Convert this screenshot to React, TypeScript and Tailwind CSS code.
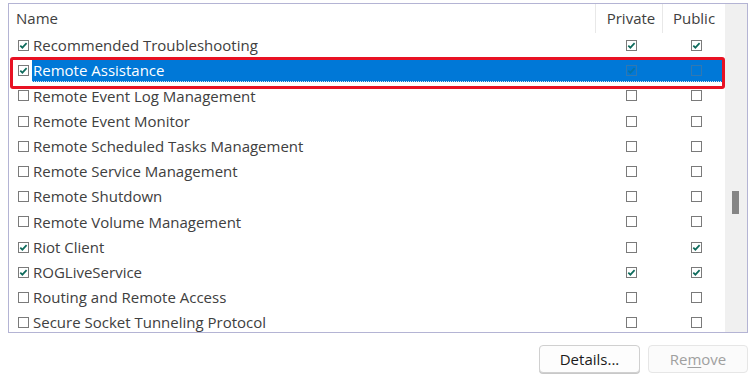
import React from "react";

type Row = { name: string; on: boolean; priv: boolean; pub: boolean; sel?: boolean };

const rows: Row[] = [
  { name: "Recommended Troubleshooting", on: true, priv: true, pub: true },
  { name: "Remote Assistance", on: true, priv: true, pub: false, sel: true },
  { name: "Remote Event Log Management", on: false, priv: false, pub: false },
  { name: "Remote Event Monitor", on: false, priv: false, pub: false },
  { name: "Remote Scheduled Tasks Management", on: false, priv: false, pub: false },
  { name: "Remote Service Management", on: false, priv: false, pub: false },
  { name: "Remote Shutdown", on: false, priv: false, pub: false },
  { name: "Remote Volume Management", on: false, priv: false, pub: false },
  { name: "Riot Client", on: true, priv: false, pub: true },
  { name: "ROGLiveService", on: true, priv: true, pub: true },
  { name: "Routing and Remote Access", on: false, priv: false, pub: false },
  { name: "Secure Socket Tunneling Protocol", on: false, priv: false, pub: false },
];

function Box({ checked, faded }: { checked: boolean; faded?: boolean }) {
  return (
    <svg width="11" height="11" viewBox="0 0 11 11" className={faded ? "opacity-40" : ""}>
      <rect
        x="0.5"
        y="0.5"
        width="10"
        height="10"
        fill={faded ? "none" : "#ffffff"}
        stroke="#7a7a7a"
        strokeWidth="1"
      />
      {checked && (
        <path d="M2.3 5.6 L4.4 7.7 L8.6 3.2" fill="none" stroke="#0e6b5c" strokeWidth="1.7" />
      )}
    </svg>
  );
}

export default function App() {
  return (
    <div
      className="w-[750px] h-[375px] bg-white relative overflow-hidden text-[#404040]"
      style={{ fontFamily: '"Open Sans", "Noto Sans", sans-serif' }}
    >
      <div className="pt-[3px] pl-[8px] pr-[2px]">
        <div className="h-[330px] border border-[#b4b4d4] flex overflow-hidden">
          <div className="flex-1 flex flex-col">
            {/* header */}
            <div className="h-[29px] flex text-[15px] shrink-0">
              <div className="w-[587px] pl-[7px] flex items-center border-r border-[#e8e8e8]">Name</div>
              <div className="w-[67px] flex items-center justify-center border-r border-[#e8e8e8] pl-[4px]">Private</div>
              <div className="w-[62px] flex items-center justify-center">Public</div>
            </div>
            {rows.map((r, i) => (
              <div key={i} className="h-[25.2px] flex items-center shrink-0 relative text-[15px]">
                <div className="w-[23px] pl-[9px] flex items-center">
                  <Box checked={r.on} />
                </div>
                <div
                  className={
                    r.sel
                      ? "flex-1 h-[22px] flex items-center bg-[#0078d7] text-white border-b border-dotted border-[#cfe3f5]"
                      : "flex-1 h-full flex items-center"
                  }
                >
                  <div className="w-[564px] pl-[1px] whitespace-nowrap">{r.name}</div>
                  <div className="w-[67px] flex items-center justify-center pl-[4px]">
                    <Box checked={r.priv} faded={r.sel} />
                  </div>
                  <div className="w-[62px] flex items-center justify-center pl-[4px]">
                    <Box checked={r.pub} faded={r.sel} />
                  </div>
                </div>
                {r.sel && (
                  <div className="absolute left-[1px] top-[-1px] w-[715px] h-[32px] border-[3px] border-[#e81123] rounded-[3px]" />
                )}
              </div>
            ))}
          </div>
          {/* scrollbar */}
          <div className="w-[22px] bg-[#f0f0f0] relative shrink-0">
            <div className="absolute left-[7px] top-[187px] w-[7px] h-[23px] bg-[#858585]" />
          </div>
        </div>
      </div>
      <div className="flex justify-end gap-[8px] pr-[2px] pt-[12px]">
        <button className="w-[101px] h-[28px] rounded-[4px] border border-[#d0d0d0] bg-[#fdfdfd] text-[15px] text-[#1b1b1b] shadow-[0_1px_0_#c8c8c8]">
          Details...
        </button>
        <button className="w-[100px] h-[28px] rounded-[4px] border border-[#e6e6e6] bg-[#fbfbfb] text-[15px] text-[#a0a0a0]">
          Re<span className="underline underline-offset-2">m</span>ove
        </button>
      </div>
    </div>
  );
}
